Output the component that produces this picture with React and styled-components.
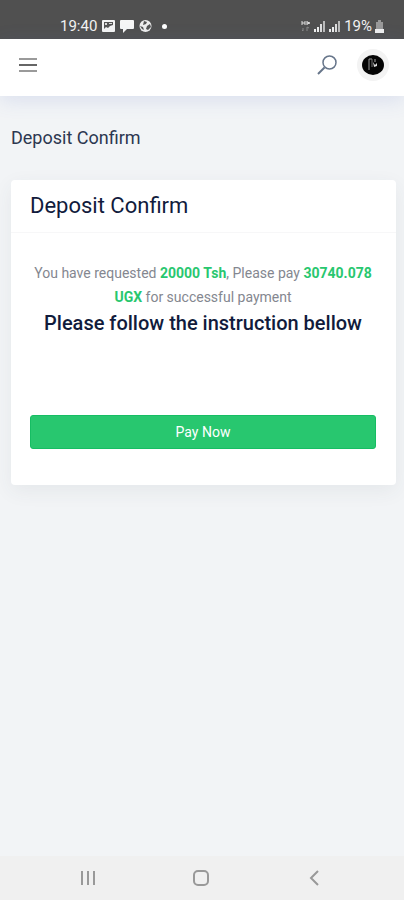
import styled, { createGlobalStyle } from "styled-components";

function App() {
  return (
    <>
      <GlobalStyle />
      <Page>
        <StatusBar>
          <StatusGroup>
            <Clock>19:40</Clock>
            <svg width="13" height="12" viewBox="0 0 13 12">
              <rect width="13" height="12" rx="1" fill="#f4f4f4" />
              <path d="M2 2h9v3L8 6 6 8 4 7 2 9z" fill="#555" />
              <path d="M3 3h2v2H3zM7 3h3v1H7z" fill="#ddd" />
            </svg>
            <svg width="14" height="13" viewBox="0 0 14 13">
              <path d="M1 0h12q1 0 1 1v7q0 1-1 1H7l-4 4V9H1Q0 9 0 8V1q0-1 1-1z" fill="#f6f6f6" />
            </svg>
            <svg width="13" height="12" viewBox="0 0 13 12">
              <circle cx="6.5" cy="6" r="6" fill="#eee" />
              <path d="M5 1l3 1-1 2-3 1zM1 6l3 1 1 3-2-1zM8 6l3-2 1 3-3 3-2-1z" fill="#555" />
            </svg>
            <Dot />
          </StatusGroup>
          <StatusGroup $tight>
            <svg width="10" height="12" viewBox="0 0 10 12" fill="none">
              <path d="M1 1v4M1 3h3M4 1v4M6 1v4M6 2l3 1-3 1" stroke="#ddd" />
              <path d="M2 8v3l-1-1M6 11V7l2 1" stroke="#888" />
            </svg>
            <Signal />
            <Signal />
            <Clock>19%</Clock>
            <svg width="9" height="13" viewBox="0 0 9 13">
              <path d="M3 0h3v2h2v8H1V2h2z" fill="#999" />
              <path d="M0 9h9v4H0z" fill="#eee" />
            </svg>
          </StatusGroup>
        </StatusBar>

        <Header>
          <IconButton type="button" aria-label="Open menu">
            <svg width="18" height="16" viewBox="0 0 18 16" fill="none" strokeWidth="2">
              <path d="M0 2h18M0 14h18" stroke="#9a9a9a" />
              <path d="M0 8h18" stroke="#666" />
            </svg>
          </IconButton>
          <Actions>
            <IconButton type="button" aria-label="Search">
              <svg width="20" height="20" viewBox="0 0 20 20" fill="none" stroke="#66758a">
                <circle cx="12.5" cy="7.5" r="6.5" strokeWidth="1.5" />
                <path d="M7.5 12.5L1 19" strokeWidth="2" />
              </svg>
            </IconButton>
            <Avatar type="button" aria-label="Account">
              <svg width="22" height="20" viewBox="0 0 22 20" fill="none">
                <ellipse cx="11" cy="10" rx="11" ry="10" fill="#050505" />
                <path d="M7 4v11M7 4h3" stroke="#999" />
                <path d="M10 4v8" stroke="#777" />
                <path d="M11 7l2 3 2-2v3l-3 1z" fill="#ddd" />
                <path d="M13 4v3" stroke="#aaa" />
              </svg>
            </Avatar>
          </Actions>
        </Header>

        <Main>
          <PageTitle>Deposit Confirm</PageTitle>
          <Card>
            <CardHeader>
              <CardTitle>Deposit Confirm</CardTitle>
            </CardHeader>
            <CardBody>
              <Summary>
                You have requested <b>20000 Tsh</b>, Please pay <b>30740.078 UGX</b> for successful payment
              </Summary>
              <Instruction>Please follow the instruction bellow</Instruction>
              <PayButton type="button">Pay Now</PayButton>
            </CardBody>
          </Card>
        </Main>

        <NavBar>
          <IconButton type="button" aria-label="Recent apps">
            <svg width="16" height="16" viewBox="0 0 16 16" stroke="#999" strokeWidth="2">
              <path d="M2 1v14M8 1v14M14 1v14" />
            </svg>
          </IconButton>
          <IconButton type="button" aria-label="Home">
            <svg width="18" height="18" viewBox="0 0 18 18" fill="none" stroke="#999" strokeWidth="2">
              <rect x="2" y="2" width="14" height="14" rx="4" />
            </svg>
          </IconButton>
          <IconButton type="button" aria-label="Back">
            <svg width="16" height="16" viewBox="0 0 16 16" fill="none" stroke="#999" strokeWidth="2">
              <path d="M12 1L5 8l7 7" />
            </svg>
          </IconButton>
        </NavBar>
      </Page>
    </>
  );
}

function Signal() {
  return (
    <svg width="12" height="12" viewBox="0 0 12 12" strokeWidth="2">
      <path d="M1 9v3M4 7v5" stroke="#eee" />
      <path d="M7 4v8" stroke="#ddd" />
      <path d="M10 1v11" stroke="#bbb" />
    </svg>
  );
}

const GlobalStyle = createGlobalStyle`
  * {
    box-sizing: border-box;
  }
  body {
    margin: 0;
    background: #f2f4f6;
    font-family: Roboto, "Liberation Sans", sans-serif;
  }
  h1, h2, h3, p {
    margin: 0;
  }
`;

const Page = styled.div`
  display: flex;
  flex-direction: column;
  min-height: 100vh;
`;

const StatusBar = styled.div`
  display: flex;
  justify-content: space-between;
  height: 39px;
  padding: 13px 20px 0 60px;
  background: #505050;
`;

const StatusGroup = styled.div`
  display: flex;
  align-items: center;
  height: 26px;
  gap: ${(props) => (props.$tight ? "3px" : "5px")};
`;

const Clock = styled.span`
  color: #f2f2f2;
  font-size: 15px;
  line-height: 24px;
`;

const Dot = styled.span`
  width: 5px;
  height: 5px;
  margin-left: 5px;
  border-radius: 50%;
  background: #fff;
`;

const Header = styled.header`
  display: flex;
  align-items: center;
  justify-content: space-between;
  height: 57px;
  padding: 0 15px 5px 19px;
  background: #fff;
  box-shadow: 0 4px 20px rgba(90, 110, 200, 0.16);
`;

const IconButton = styled.button`
  display: flex;
  padding: 0;
  border: 0;
  background: none;
  cursor: pointer;
`;

const Actions = styled.div`
  display: flex;
  align-items: center;
  gap: 20px;
`;

const Avatar = styled(IconButton)`
  align-items: center;
  justify-content: center;
  width: 32px;
  height: 32px;
  border-radius: 50%;
  background: #f3f3f3;
`;

const Main = styled.main`
  flex: 1;
  padding: 28px 8px 24px 11px;
`;

const PageTitle = styled.h1`
  color: #2c3750;
  font-size: 18px;
  font-weight: 400;
  line-height: 28px;
`;

const Card = styled.section`
  margin-top: 28px;
  border-radius: 4px;
  background: #fff;
  box-shadow: 0 6px 20px rgba(60, 70, 90, 0.07);
`;

const CardHeader = styled.div`
  padding: 12px 20px 12px 19px;
  border-bottom: 1px solid #f7f7f8;
`;

const CardTitle = styled.h2`
  color: #111b3c;
  font-size: 22px;
  font-weight: 400;
  line-height: 28px;
`;

const CardBody = styled.div`
  padding: 28px 20px 36px 19px;
  text-align: center;
`;

const Summary = styled.p`
  color: #848790;
  font-size: 14px;
  line-height: 24px;

  b {
    color: #28c76f;
    font-weight: 700;
  }
`;

const Instruction = styled.h3`
  color: #111b3c;
  font-size: 20px;
  font-weight: 500;
  line-height: 28px;
`;

const PayButton = styled.button`
  width: 100%;
  height: 34px;
  margin-top: 78px;
  border: 1px solid #16bd63;
  border-radius: 3px;
  background: #28c76f;
  color: #fff;
  font-family: inherit;
  font-size: 14px;
  cursor: pointer;
`;

const NavBar = styled.nav`
  display: flex;
  align-items: center;
  justify-content: space-between;
  height: 44px;
  padding: 0 82px 0 80px;
  background: #f0f0f0;
`;

export default App;
